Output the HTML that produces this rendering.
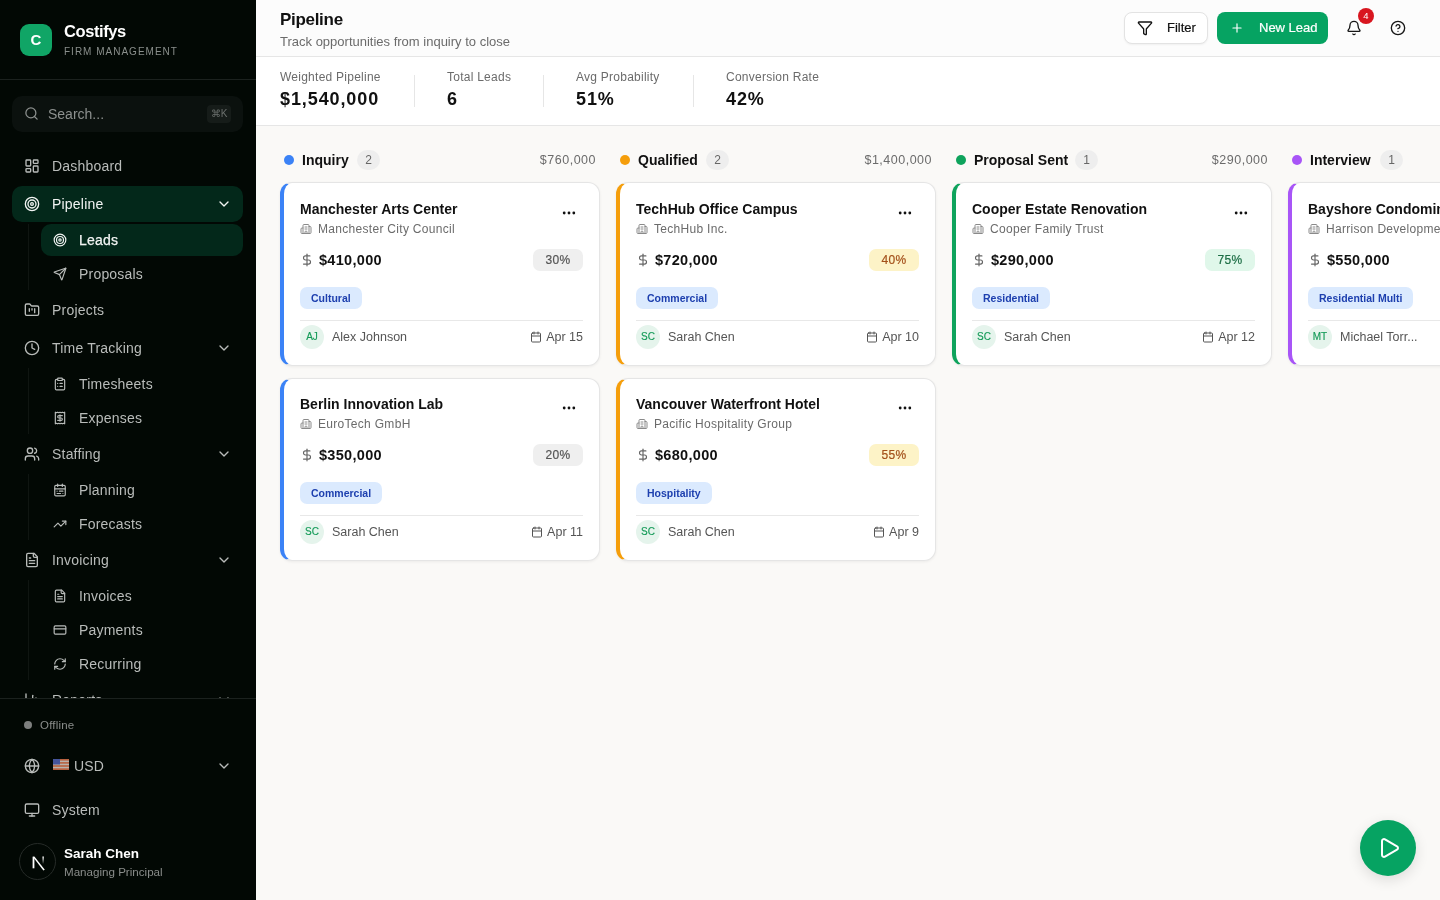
<!DOCTYPE html>
<html><head><meta charset="utf-8">
<style>
*{box-sizing:border-box;margin:0;padding:0}
html,body{width:1440px;height:900px;overflow:hidden;font-family:"Liberation Sans",sans-serif;background:#faf9f7}
.abs{position:absolute}
svg{display:block}
.sb{will-change:transform;position:absolute;left:0;top:0;width:256px;height:900px;background:#020804;color:#b9bcba;overflow:hidden}
.logo{left:20px;top:24px;width:32px;height:32px;border-radius:9px;background:#10a566;color:#fff;font-weight:bold;font-size:15px;text-align:center;line-height:32px}
.brand{left:64px;top:22px;color:#fff;font-weight:bold;font-size:16.5px;line-height:18px;letter-spacing:-0.4px}
.brand2{left:64px;top:46px;color:#8a8f8c;font-size:10px;letter-spacing:1.0px;line-height:11px}
.hr{left:0;width:256px;height:1px;background:#1b211e}
.search{left:12px;top:96px;width:231px;height:36px;border-radius:10px;background:#0b110e}
.stx{left:36px;top:0;line-height:36px;font-size:14px;color:#8d918f}
.kbd{left:195px;top:9px;width:24px;height:18px;border-radius:4px;background:#161c19;color:#6b706d;font-size:10px;line-height:18px;text-align:center}
.navwrap{left:0;top:0;width:256px;height:698px;overflow:hidden}
.nav{left:12px;width:231px;height:36px;border-radius:10px;font-size:14px;color:#b9bcba}
.nav .ic{position:absolute;left:12px;top:10px;width:16px;height:16px}
.nav .tx{position:absolute;left:40px;top:0;line-height:36px;white-space:nowrap;letter-spacing:0.2px}
.nav .chev{position:absolute;left:204px;top:10px;width:16px;height:16px}
.sub{left:41px;width:202px;height:32px;border-radius:10px;font-size:14px;color:#b9bcba}
.sub .ic{position:absolute;left:12px;top:9px;width:14px;height:14px}
.sub .tx{position:absolute;left:38px;top:0;line-height:32px;letter-spacing:0.2px}
.act{background:#03281a;color:#f2f4f3}
.sub.act .tx{-webkit-text-stroke:0.25px #f2f4f3}
.vl{left:28px;width:1px;background:#0f1511}
.offl{left:40px;top:718px;font-size:11.5px;letter-spacing:0.2px;line-height:14px;color:#8a8d8b}
.avatar{left:19px;top:843px;width:37px;height:37px;border-radius:50%;background:#020804;border:1px solid #262b28}
.uname{left:64px;top:846px;color:#fff;font-size:13.5px;font-weight:bold;line-height:16px}
.urole{left:64px;top:865px;color:#8a8d8b;font-size:11.6px;line-height:14px}
.main{will-change:transform;position:absolute;left:256px;top:0;width:1184px;height:900px;background:#faf9f7;overflow:hidden}
.hdr{left:0;top:0;width:1184px;height:57px;background:#fcfcfc;border-bottom:1px solid #e6e6e6}
.htitle{left:24px;top:9px;font-size:17px;font-weight:bold;color:#111;line-height:22px;letter-spacing:-0.3px}
.hsub{left:24px;top:34px;font-size:13px;color:#6b6b6b;line-height:15px}
.btnf{left:868px;top:12px;width:84px;height:32px;border:1px solid #e3e3e3;border-radius:8px;background:#fff;font-size:13px;color:#111;box-shadow:0 1px 2px rgba(0,0,0,.05)}
.btnn{left:961px;top:12px;width:111px;height:32px;border-radius:8px;background:#06a362;color:#fff;font-size:13px}
.badge{left:1102px;top:8px;width:16px;height:16px;border-radius:50%;background:#d8161f;color:#fff;font-size:9.5px;font-weight:normal;line-height:16px;text-align:center;border:0}
.stats{left:0;top:57px;width:1184px;height:69px;background:#fff;border-bottom:1px solid #e6e6e6}
.slab{top:13px;font-size:12px;color:#6b6b6b;line-height:14px;letter-spacing:0.25px}
.sval{top:31px;font-size:18px;font-weight:bold;color:#111;line-height:22px;letter-spacing:0.9px}
.sdiv{top:18px;width:1px;height:32px;background:#e6e6e6}
.boardwrap{left:0;top:126px;width:1184px;height:774px}
.colh{top:24px;width:320px;height:20px}
.dot{left:4px;top:5px;width:10px;height:10px;border-radius:50%}
.cname{left:22px;top:0;line-height:20px;font-size:14px;font-weight:bold;color:#111}
.cnt{top:0;height:20px;min-width:23px;border-radius:10px;background:#eeeeee;color:#666;font-size:12px;line-height:20px;text-align:center}
.camt{right:4px;top:0;line-height:20px;font-size:12.5px;color:#6b6b6b;letter-spacing:0.5px}
.card{width:320px;height:184px;background:#fff;border:1px solid #e5e5e5;border-left:4px solid;border-radius:12px;box-shadow:0 1px 3px rgba(0,0,0,.06)}
.ctitle{left:16px;top:17px;font-size:14px;font-weight:bold;color:#111;line-height:18px;white-space:nowrap}
.more{left:278px;top:28px;width:14px;height:4px}
.more i{float:left;width:3px;height:3px;border-radius:50%;background:#111;margin-right:2px}
.cli{left:16px;top:38px;font-size:12px;color:#6b6b6b;line-height:16px;white-space:nowrap;letter-spacing:0.3px}
.cli svg{position:absolute;left:0;top:2px;color:#8a8a8a}
.cli span{position:absolute;left:18px;top:0}
.val{left:16px;top:67px;font-size:14.5px;letter-spacing:0.3px;font-weight:bold;color:#111;line-height:20px;white-space:nowrap}
.val svg{position:absolute;left:0;top:3px;color:#666}
.val span{position:absolute;left:19px;top:0}
.pct{right:16px;top:66px;width:50px;height:22px;border-radius:7px;font-size:12px;line-height:22px;text-align:center;letter-spacing:0.4px;-webkit-text-stroke:0.2px currentColor}
.pct.gray{background:#efefef;color:#555}
.pct.yellow{background:#fdf3c7;color:#a3501a}
.pct.green{background:#e0f7ea;color:#1d6e45}
.tag{left:16px;top:104px;height:22px;padding:0 11px;border-radius:7px;background:#dbeafe;color:#1e40af;font-size:10.5px;font-weight:bold;line-height:22px;white-space:nowrap}
.cdiv{left:16px;top:137px;width:283px;height:1px;background:#e8e8e8}
.av{left:16px;top:142px;width:24px;height:24px;border-radius:50%;background:#e5f4ec;color:#139a57;font-size:10px;-webkit-text-stroke:0.15px #139a57;line-height:24px;text-align:center}
.pname{left:48px;top:146px;font-size:12.5px;color:#555;line-height:16px;white-space:nowrap}
.cdate{right:16px;top:146px;font-size:12.5px;color:#555;line-height:16px;white-space:nowrap;padding-left:16px}
.cdate svg{position:absolute;left:0;top:2px}
.fab{left:1104px;top:820px;width:56px;height:56px;border-radius:50%;background:#06a362;box-shadow:0 4px 14px rgba(0,0,0,.12)}
.fab svg{position:absolute;left:17px;top:16px}
.card.r2{height:183px}
.card.r2>.abs{margin-top:-1px}

</style></head><body>
<div class="sb">
  <div class="abs logo">C</div>
  <div class="abs brand">Costifys</div>
  <div class="abs brand2">FIRM MANAGEMENT</div>
  <div class="abs hr" style="top:79px"></div>
  <div class="abs search"><div class="abs" style="left:12px;top:10px;color:#8d918f"><svg width="15" height="15" viewBox="0 0 24 24" fill="none" stroke="currentColor" stroke-width="2" stroke-linecap="round" stroke-linejoin="round"><circle cx="11" cy="11" r="8"/><path d="m21 21-4.3-4.3"/></svg></div><div class="abs stx">Search...</div><div class="abs kbd">&#8984;K</div></div>
  <div class="abs navwrap"><div class="abs nav" style="top:148px"><div class="ic"><svg width="16" height="16" viewBox="0 0 24 24" fill="none" stroke="currentColor" stroke-width="2" stroke-linecap="round" stroke-linejoin="round"><rect width="7" height="9" x="3" y="3" rx="1"/><rect width="7" height="5" x="14" y="3" rx="1"/><rect width="7" height="9" x="14" y="12" rx="1"/><rect width="7" height="5" x="3" y="16" rx="1"/></svg></div><div class="tx">Dashboard</div></div><div class="abs nav act" style="top:186px"><div class="ic"><svg width="16" height="16" viewBox="0 0 24 24" fill="none" stroke="currentColor" stroke-width="2" stroke-linecap="round" stroke-linejoin="round"><circle cx="12" cy="12" r="10"/><circle cx="12" cy="12" r="6"/><circle cx="12" cy="12" r="2"/></svg></div><div class="tx">Pipeline</div><div class="chev"><svg width="16" height="16" viewBox="0 0 24 24" fill="none" stroke="currentColor" stroke-width="2" stroke-linecap="round" stroke-linejoin="round"><path d="m6 9 6 6 6-6"/></svg></div></div><div class="abs sub act" style="top:224px"><div class="ic"><svg width="14" height="14" viewBox="0 0 24 24" fill="none" stroke="currentColor" stroke-width="2" stroke-linecap="round" stroke-linejoin="round"><circle cx="12" cy="12" r="10"/><circle cx="12" cy="12" r="6"/><circle cx="12" cy="12" r="2"/></svg></div><div class="tx">Leads</div></div><div class="abs sub" style="top:258px"><div class="ic"><svg width="14" height="14" viewBox="0 0 24 24" fill="none" stroke="currentColor" stroke-width="2" stroke-linecap="round" stroke-linejoin="round"><path d="M14.536 21.686a.5.5 0 0 0 .937-.024l6.5-19a.496.496 0 0 0-.635-.635l-19 6.5a.5.5 0 0 0-.024.937l7.93 3.18a2 2 0 0 1 1.112 1.11z"/><path d="m21.854 2.147-10.94 10.939"/></svg></div><div class="tx">Proposals</div></div><div class="abs nav" style="top:292px"><div class="ic"><svg width="16" height="16" viewBox="0 0 24 24" fill="none" stroke="currentColor" stroke-width="2" stroke-linecap="round" stroke-linejoin="round"><path d="M4 20h16a2 2 0 0 0 2-2V8a2 2 0 0 0-2-2h-7.930a2 2 0 0 1-1.660-.9l-.820-1.200A2 2 0 0 0 7.930 3H4a2 2 0 0 0-2 2v13c0 1.100.9 2 2 2Z"/><path d="M8 10v4"/><path d="M12 10v2"/><path d="M16 10v6"/></svg></div><div class="tx">Projects</div></div><div class="abs nav" style="top:330px"><div class="ic"><svg width="16" height="16" viewBox="0 0 24 24" fill="none" stroke="currentColor" stroke-width="2" stroke-linecap="round" stroke-linejoin="round"><circle cx="12" cy="12" r="10"/><polyline points="12 6 12 12 16 14"/></svg></div><div class="tx">Time Tracking</div><div class="chev"><svg width="16" height="16" viewBox="0 0 24 24" fill="none" stroke="currentColor" stroke-width="2" stroke-linecap="round" stroke-linejoin="round"><path d="m6 9 6 6 6-6"/></svg></div></div><div class="abs sub" style="top:368px"><div class="ic"><svg width="14" height="14" viewBox="0 0 24 24" fill="none" stroke="currentColor" stroke-width="2" stroke-linecap="round" stroke-linejoin="round"><rect width="8" height="4" x="8" y="2" rx="1" ry="1"/><path d="M16 4h2a2 2 0 0 1 2 2v14a2 2 0 0 1-2 2H6a2 2 0 0 1-2-2V6a2 2 0 0 1 2-2h2"/><path d="M12 11h4"/><path d="M12 16h4"/><path d="M8 11h.01"/><path d="M8 16h.01"/></svg></div><div class="tx">Timesheets</div></div><div class="abs sub" style="top:402px"><div class="ic"><svg width="14" height="14" viewBox="0 0 24 24" fill="none" stroke="currentColor" stroke-width="2" stroke-linecap="round" stroke-linejoin="round"><path d="M4 2v20l2-1 2 1 2-1 2 1 2-1 2 1 2-1 2 1V2l-2 1-2-1-2 1-2-1-2 1-2-1-2 1Z"/><path d="M16 8h-6a2 2 0 1 0 0 4h4a2 2 0 1 1 0 4H8"/><path d="M12 17.5v-11"/></svg></div><div class="tx">Expenses</div></div><div class="abs nav" style="top:436px"><div class="ic"><svg width="16" height="16" viewBox="0 0 24 24" fill="none" stroke="currentColor" stroke-width="2" stroke-linecap="round" stroke-linejoin="round"><path d="M16 21v-2a4 4 0 0 0-4-4H6a4 4 0 0 0-4 4v2"/><circle cx="9" cy="7" r="4"/><path d="M22 21v-2a4 4 0 0 0-3-3.870"/><path d="M16 3.130a4 4 0 0 1 0 7.750"/></svg></div><div class="tx">Staffing</div><div class="chev"><svg width="16" height="16" viewBox="0 0 24 24" fill="none" stroke="currentColor" stroke-width="2" stroke-linecap="round" stroke-linejoin="round"><path d="m6 9 6 6 6-6"/></svg></div></div><div class="abs sub" style="top:474px"><div class="ic"><svg width="14" height="14" viewBox="0 0 24 24" fill="none" stroke="currentColor" stroke-width="2" stroke-linecap="round" stroke-linejoin="round"><rect width="18" height="18" x="3" y="4" rx="2"/><path d="M16 2v4"/><path d="M3 10h18"/><path d="M8 2v4"/><path d="M17 14h-6"/><path d="M13 18H7"/><path d="M7 14h.01"/><path d="M17 18h.01"/></svg></div><div class="tx">Planning</div></div><div class="abs sub" style="top:508px"><div class="ic"><svg width="14" height="14" viewBox="0 0 24 24" fill="none" stroke="currentColor" stroke-width="2" stroke-linecap="round" stroke-linejoin="round"><polyline points="22 7 13.5 15.5 8.5 10.5 2 17"/><polyline points="16 7 22 7 22 13"/></svg></div><div class="tx">Forecasts</div></div><div class="abs nav" style="top:542px"><div class="ic"><svg width="16" height="16" viewBox="0 0 24 24" fill="none" stroke="currentColor" stroke-width="2" stroke-linecap="round" stroke-linejoin="round"><path d="M15 2H6a2 2 0 0 0-2 2v16a2 2 0 0 0 2 2h12a2 2 0 0 0 2-2V7Z"/><path d="M14 2v4a2 2 0 0 0 2 2h4"/><path d="M10 9H8"/><path d="M16 13H8"/><path d="M16 17H8"/></svg></div><div class="tx">Invoicing</div><div class="chev"><svg width="16" height="16" viewBox="0 0 24 24" fill="none" stroke="currentColor" stroke-width="2" stroke-linecap="round" stroke-linejoin="round"><path d="m6 9 6 6 6-6"/></svg></div></div><div class="abs sub" style="top:580px"><div class="ic"><svg width="14" height="14" viewBox="0 0 24 24" fill="none" stroke="currentColor" stroke-width="2" stroke-linecap="round" stroke-linejoin="round"><path d="M15 2H6a2 2 0 0 0-2 2v16a2 2 0 0 0 2 2h12a2 2 0 0 0 2-2V7Z"/><path d="M14 2v4a2 2 0 0 0 2 2h4"/><path d="M10 9H8"/><path d="M16 13H8"/><path d="M16 17H8"/></svg></div><div class="tx">Invoices</div></div><div class="abs sub" style="top:614px"><div class="ic"><svg width="14" height="14" viewBox="0 0 24 24" fill="none" stroke="currentColor" stroke-width="2" stroke-linecap="round" stroke-linejoin="round"><rect width="20" height="14" x="2" y="5" rx="2"/><line x1="2" x2="22" y1="10" y2="10"/></svg></div><div class="tx">Payments</div></div><div class="abs sub" style="top:648px"><div class="ic"><svg width="14" height="14" viewBox="0 0 24 24" fill="none" stroke="currentColor" stroke-width="2" stroke-linecap="round" stroke-linejoin="round"><path d="M3 12a9 9 0 0 1 9-9 9.750 9.750 0 0 1 6.740 2.740L21 8"/><path d="M21 3v5h-5"/><path d="M21 12a9 9 0 0 1-9 9 9.750 9.750 0 0 1-6.740-2.740L3 16"/><path d="M8 16H3v5"/></svg></div><div class="tx">Recurring</div></div><div class="abs nav" style="top:682px"><div class="ic"><svg width="16" height="16" viewBox="0 0 24 24" fill="none" stroke="currentColor" stroke-width="2" stroke-linecap="round" stroke-linejoin="round"><path d="M3 3v16a2 2 0 0 0 2 2h16"/><path d="M18 17V9"/><path d="M13 17V5"/><path d="M8 17v-3"/></svg></div><div class="tx">Reports</div><div class="chev"><svg width="16" height="16" viewBox="0 0 24 24" fill="none" stroke="currentColor" stroke-width="2" stroke-linecap="round" stroke-linejoin="round"><path d="m6 9 6 6 6-6"/></svg></div></div><div class="abs vl" style="top:224px;height:66px"></div><div class="abs vl" style="top:368px;height:66px"></div><div class="abs vl" style="top:474px;height:66px"></div><div class="abs vl" style="top:580px;height:100px"></div></div>
  <div class="abs hr" style="top:698px"></div>
  <div class="abs" style="left:24px;top:721px;width:8px;height:8px;border-radius:50%;background:#7d7f7e"></div>
  <div class="abs offl">Offline</div>
  <div class="abs nav" style="top:748px"><div class="ic"><svg width="16" height="16" viewBox="0 0 24 24" fill="none" stroke="currentColor" stroke-width="2" stroke-linecap="round" stroke-linejoin="round"><circle cx="12" cy="12" r="10"/><path d="M12 2a14.500 14.500 0 0 0 0 20 14.500 14.500 0 0 0 0-20"/><path d="M2 12h20"/></svg></div><svg class="abs" style="left:41px;top:11px" width="16" height="11" viewBox="0 0 16 11"><rect width="16" height="11" fill="#b9b2ab"/><rect y="0" width="16" height="1.6" fill="#b8613f"/><rect y="3.1" width="16" height="1.6" fill="#b8613f"/><rect y="6.2" width="16" height="1.6" fill="#b8613f"/><rect y="9.3" width="16" height="1.7" fill="#b8613f"/><rect width="7" height="5.5" fill="#45549a"/></svg><div class="tx" style="left:62px">USD</div><div class="chev"><svg width="16" height="16" viewBox="0 0 24 24" fill="none" stroke="currentColor" stroke-width="2" stroke-linecap="round" stroke-linejoin="round"><path d="m6 9 6 6 6-6"/></svg></div></div>
  <div class="abs nav" style="top:792px"><div class="ic"><svg width="16" height="16" viewBox="0 0 24 24" fill="none" stroke="currentColor" stroke-width="2" stroke-linecap="round" stroke-linejoin="round"><rect width="20" height="14" x="2" y="3" rx="2"/><line x1="8" x2="16" y1="21" y2="21"/><line x1="12" x2="12" y1="17" y2="21"/></svg></div><div class="tx">System</div></div>
  <div class="abs avatar"><svg width="37" height="37" viewBox="0 0 37 37" style="position:absolute;left:-0.4px;top:-0.3px"><defs><linearGradient id="ng" x1="0" y1="0" x2="0" y2="1"><stop offset="0" stop-color="#fff"/><stop offset="1" stop-color="#fff" stop-opacity="0"/></linearGradient></defs><rect x="12.6" y="12.7" width="1.8" height="11.6" fill="#fff"/><path d="M12.8 12.7 L14.6 12.7 L24.8 25.7 L23.4 26.5 Z" fill="#fff"/><rect x="22.4" y="12.5" width="1.5" height="7.5" fill="url(#ng)"/></svg></div>
  <div class="abs uname">Sarah Chen</div>
  <div class="abs urole">Managing Principal</div>
</div>
<div class="main"><div class="abs hdr">
  <div class="abs htitle">Pipeline</div>
  <div class="abs hsub">Track opportunities from inquiry to close</div>
  <div class="abs btnf"><svg width="16" height="16" viewBox="0 0 24 24" fill="none" stroke="currentColor" stroke-width="2" stroke-linecap="round" stroke-linejoin="round" class="abs" style="left:12px;top:7px"><path d="M10 20a1 1 0 0 0 .553.895l2 1A1 1 0 0 0 14 21v-7a2 2 0 0 1 .517-1.341L21.740 4.670A1 1 0 0 0 21 3H3a1 1 0 0 0-.742 1.670l7.225 7.989A2 2 0 0 1 10 14z"/></svg><span class="abs" style="left:42px;top:0;line-height:30px;-webkit-text-stroke:0.2px #111">Filter</span></div>
  <div class="abs btnn"><svg width="14" height="14" viewBox="0 0 24 24" fill="none" stroke="currentColor" stroke-width="2" stroke-linecap="round" stroke-linejoin="round" class="abs" style="left:13px;top:9px"><path d="M5 12h14"/><path d="M12 5v14"/></svg><span class="abs" style="left:42px;top:0;line-height:32px;-webkit-text-stroke:0.2px #fff">New Lead</span></div>
  <div class="abs" style="left:1090px;top:20px;color:#161616"><svg width="16" height="16" viewBox="0 0 24 24" fill="none" stroke="currentColor" stroke-width="2" stroke-linecap="round" stroke-linejoin="round"><path d="M10.268 21a2 2 0 0 0 3.464 0"/><path d="M3.262 15.326A1 1 0 0 0 4 17h16a1 1 0 0 0 .740-1.673C19.410 13.956 18 12.499 18 8A6 6 0 0 0 6 8c0 4.499-1.411 5.956-2.738 7.326"/></svg></div>
  <div class="abs badge">4</div>
  <div class="abs" style="left:1134px;top:20px;color:#161616"><svg width="16" height="16" viewBox="0 0 24 24" fill="none" stroke="currentColor" stroke-width="2" stroke-linecap="round" stroke-linejoin="round"><circle cx="12" cy="12" r="10"/><path d="M9.090 9a3 3 0 0 1 5.830 1c0 2-3 3-3 3"/><path d="M12 17h.01"/></svg></div>
</div><div class="abs stats"><div class="abs slab" style="left:24px">Weighted Pipeline</div><div class="abs sval" style="left:24px">$1,540,000</div><div class="abs slab" style="left:191px">Total Leads</div><div class="abs sval" style="left:191px">6</div><div class="abs slab" style="left:320px">Avg Probability</div><div class="abs sval" style="left:320px">51%</div><div class="abs slab" style="left:470px">Conversion Rate</div><div class="abs sval" style="left:470px">42%</div><div class="abs sdiv" style="left:158px"></div><div class="abs sdiv" style="left:287px"></div><div class="abs sdiv" style="left:437px"></div></div><div class="abs boardwrap"><div class="abs colh" style="left:24px"><div class="abs dot" style="background:#3b82f6"></div><div class="abs cname">Inquiry</div><div class="abs cnt" style="left:77px">2</div><div class="abs camt">$760,000</div></div><div class="abs card" style="left:24px;top:56px;border-left-color:#3b82f6"><div class="abs ctitle">Manchester Arts Center</div><svg class="abs more" width="16" height="4" viewBox="0 0 16 4"><circle cx="2.5" cy="2" r="1.6" fill="#111"/><circle cx="8" cy="2" r="1.6" fill="#111"/><circle cx="13.5" cy="2" r="1.6" fill="#111"/></svg><div class="abs cli"><svg width="12" height="12" viewBox="0 0 24 24" fill="none" stroke="currentColor" stroke-width="2" stroke-linecap="round" stroke-linejoin="round"><path d="M10 12h4"/><path d="M10 8h4"/><path d="M14 21v-3a2 2 0 0 0-4 0v3"/><path d="M6 10H4a2 2 0 0 0-2 2v7a2 2 0 0 0 2 2h16a2 2 0 0 0 2-2V9a2 2 0 0 0-2-2h-2"/><path d="M6 21V5a2 2 0 0 1 2-2h8a2 2 0 0 1 2 2v16"/></svg><span>Manchester City Council</span></div><div class="abs val"><svg width="14" height="14" viewBox="0 0 24 24" fill="none" stroke="currentColor" stroke-width="2" stroke-linecap="round" stroke-linejoin="round"><line x1="12" x2="12" y1="2" y2="22"/><path d="M17 5H9.500a3.500 3.500 0 0 0 0 7h5a3.500 3.500 0 0 1 0 7H6"/></svg><span>$410,000</span></div><div class="abs pct gray">30%</div><div class="abs tag">Cultural</div><div class="abs cdiv"></div><div class="abs av">AJ</div><div class="abs pname">Alex Johnson</div><div class="abs cdate"><svg width="12" height="12" viewBox="0 0 24 24" fill="none" stroke="currentColor" stroke-width="2" stroke-linecap="round" stroke-linejoin="round"><rect width="18" height="18" x="3" y="4" rx="2"/><path d="M16 2v4"/><path d="M8 2v4"/><path d="M3 10h18"/></svg><span>Apr 15</span></div></div><div class="abs card r2" style="left:24px;top:252px;border-left-color:#3b82f6"><div class="abs ctitle">Berlin Innovation Lab</div><svg class="abs more" width="16" height="4" viewBox="0 0 16 4"><circle cx="2.5" cy="2" r="1.6" fill="#111"/><circle cx="8" cy="2" r="1.6" fill="#111"/><circle cx="13.5" cy="2" r="1.6" fill="#111"/></svg><div class="abs cli"><svg width="12" height="12" viewBox="0 0 24 24" fill="none" stroke="currentColor" stroke-width="2" stroke-linecap="round" stroke-linejoin="round"><path d="M10 12h4"/><path d="M10 8h4"/><path d="M14 21v-3a2 2 0 0 0-4 0v3"/><path d="M6 10H4a2 2 0 0 0-2 2v7a2 2 0 0 0 2 2h16a2 2 0 0 0 2-2V9a2 2 0 0 0-2-2h-2"/><path d="M6 21V5a2 2 0 0 1 2-2h8a2 2 0 0 1 2 2v16"/></svg><span>EuroTech GmbH</span></div><div class="abs val"><svg width="14" height="14" viewBox="0 0 24 24" fill="none" stroke="currentColor" stroke-width="2" stroke-linecap="round" stroke-linejoin="round"><line x1="12" x2="12" y1="2" y2="22"/><path d="M17 5H9.500a3.500 3.500 0 0 0 0 7h5a3.500 3.500 0 0 1 0 7H6"/></svg><span>$350,000</span></div><div class="abs pct gray">20%</div><div class="abs tag">Commercial</div><div class="abs cdiv"></div><div class="abs av">SC</div><div class="abs pname">Sarah Chen</div><div class="abs cdate"><svg width="12" height="12" viewBox="0 0 24 24" fill="none" stroke="currentColor" stroke-width="2" stroke-linecap="round" stroke-linejoin="round"><rect width="18" height="18" x="3" y="4" rx="2"/><path d="M16 2v4"/><path d="M8 2v4"/><path d="M3 10h18"/></svg><span>Apr 11</span></div></div><div class="abs colh" style="left:360px"><div class="abs dot" style="background:#f59e0b"></div><div class="abs cname">Qualified</div><div class="abs cnt" style="left:90px">2</div><div class="abs camt">$1,400,000</div></div><div class="abs card" style="left:360px;top:56px;border-left-color:#f59e0b"><div class="abs ctitle">TechHub Office Campus</div><svg class="abs more" width="16" height="4" viewBox="0 0 16 4"><circle cx="2.5" cy="2" r="1.6" fill="#111"/><circle cx="8" cy="2" r="1.6" fill="#111"/><circle cx="13.5" cy="2" r="1.6" fill="#111"/></svg><div class="abs cli"><svg width="12" height="12" viewBox="0 0 24 24" fill="none" stroke="currentColor" stroke-width="2" stroke-linecap="round" stroke-linejoin="round"><path d="M10 12h4"/><path d="M10 8h4"/><path d="M14 21v-3a2 2 0 0 0-4 0v3"/><path d="M6 10H4a2 2 0 0 0-2 2v7a2 2 0 0 0 2 2h16a2 2 0 0 0 2-2V9a2 2 0 0 0-2-2h-2"/><path d="M6 21V5a2 2 0 0 1 2-2h8a2 2 0 0 1 2 2v16"/></svg><span>TechHub Inc.</span></div><div class="abs val"><svg width="14" height="14" viewBox="0 0 24 24" fill="none" stroke="currentColor" stroke-width="2" stroke-linecap="round" stroke-linejoin="round"><line x1="12" x2="12" y1="2" y2="22"/><path d="M17 5H9.500a3.500 3.500 0 0 0 0 7h5a3.500 3.500 0 0 1 0 7H6"/></svg><span>$720,000</span></div><div class="abs pct yellow">40%</div><div class="abs tag">Commercial</div><div class="abs cdiv"></div><div class="abs av">SC</div><div class="abs pname">Sarah Chen</div><div class="abs cdate"><svg width="12" height="12" viewBox="0 0 24 24" fill="none" stroke="currentColor" stroke-width="2" stroke-linecap="round" stroke-linejoin="round"><rect width="18" height="18" x="3" y="4" rx="2"/><path d="M16 2v4"/><path d="M8 2v4"/><path d="M3 10h18"/></svg><span>Apr 10</span></div></div><div class="abs card r2" style="left:360px;top:252px;border-left-color:#f59e0b"><div class="abs ctitle">Vancouver Waterfront Hotel</div><svg class="abs more" width="16" height="4" viewBox="0 0 16 4"><circle cx="2.5" cy="2" r="1.6" fill="#111"/><circle cx="8" cy="2" r="1.6" fill="#111"/><circle cx="13.5" cy="2" r="1.6" fill="#111"/></svg><div class="abs cli"><svg width="12" height="12" viewBox="0 0 24 24" fill="none" stroke="currentColor" stroke-width="2" stroke-linecap="round" stroke-linejoin="round"><path d="M10 12h4"/><path d="M10 8h4"/><path d="M14 21v-3a2 2 0 0 0-4 0v3"/><path d="M6 10H4a2 2 0 0 0-2 2v7a2 2 0 0 0 2 2h16a2 2 0 0 0 2-2V9a2 2 0 0 0-2-2h-2"/><path d="M6 21V5a2 2 0 0 1 2-2h8a2 2 0 0 1 2 2v16"/></svg><span>Pacific Hospitality Group</span></div><div class="abs val"><svg width="14" height="14" viewBox="0 0 24 24" fill="none" stroke="currentColor" stroke-width="2" stroke-linecap="round" stroke-linejoin="round"><line x1="12" x2="12" y1="2" y2="22"/><path d="M17 5H9.500a3.500 3.500 0 0 0 0 7h5a3.500 3.500 0 0 1 0 7H6"/></svg><span>$680,000</span></div><div class="abs pct yellow">55%</div><div class="abs tag">Hospitality</div><div class="abs cdiv"></div><div class="abs av">SC</div><div class="abs pname">Sarah Chen</div><div class="abs cdate"><svg width="12" height="12" viewBox="0 0 24 24" fill="none" stroke="currentColor" stroke-width="2" stroke-linecap="round" stroke-linejoin="round"><rect width="18" height="18" x="3" y="4" rx="2"/><path d="M16 2v4"/><path d="M8 2v4"/><path d="M3 10h18"/></svg><span>Apr 9</span></div></div><div class="abs colh" style="left:696px"><div class="abs dot" style="background:#0ea35c"></div><div class="abs cname">Proposal Sent</div><div class="abs cnt" style="left:123px">1</div><div class="abs camt">$290,000</div></div><div class="abs card" style="left:696px;top:56px;border-left-color:#0ea35c"><div class="abs ctitle">Cooper Estate Renovation</div><svg class="abs more" width="16" height="4" viewBox="0 0 16 4"><circle cx="2.5" cy="2" r="1.6" fill="#111"/><circle cx="8" cy="2" r="1.6" fill="#111"/><circle cx="13.5" cy="2" r="1.6" fill="#111"/></svg><div class="abs cli"><svg width="12" height="12" viewBox="0 0 24 24" fill="none" stroke="currentColor" stroke-width="2" stroke-linecap="round" stroke-linejoin="round"><path d="M10 12h4"/><path d="M10 8h4"/><path d="M14 21v-3a2 2 0 0 0-4 0v3"/><path d="M6 10H4a2 2 0 0 0-2 2v7a2 2 0 0 0 2 2h16a2 2 0 0 0 2-2V9a2 2 0 0 0-2-2h-2"/><path d="M6 21V5a2 2 0 0 1 2-2h8a2 2 0 0 1 2 2v16"/></svg><span>Cooper Family Trust</span></div><div class="abs val"><svg width="14" height="14" viewBox="0 0 24 24" fill="none" stroke="currentColor" stroke-width="2" stroke-linecap="round" stroke-linejoin="round"><line x1="12" x2="12" y1="2" y2="22"/><path d="M17 5H9.500a3.500 3.500 0 0 0 0 7h5a3.500 3.500 0 0 1 0 7H6"/></svg><span>$290,000</span></div><div class="abs pct green">75%</div><div class="abs tag">Residential</div><div class="abs cdiv"></div><div class="abs av">SC</div><div class="abs pname">Sarah Chen</div><div class="abs cdate"><svg width="12" height="12" viewBox="0 0 24 24" fill="none" stroke="currentColor" stroke-width="2" stroke-linecap="round" stroke-linejoin="round"><rect width="18" height="18" x="3" y="4" rx="2"/><path d="M16 2v4"/><path d="M8 2v4"/><path d="M3 10h18"/></svg><span>Apr 12</span></div></div><div class="abs colh" style="left:1032px"><div class="abs dot" style="background:#a855f7"></div><div class="abs cname">Interview</div><div class="abs cnt" style="left:92px">1</div><div class="abs camt"></div></div><div class="abs card" style="left:1032px;top:56px;border-left-color:#a855f7"><div class="abs ctitle">Bayshore Condominiums</div><svg class="abs more" width="16" height="4" viewBox="0 0 16 4"><circle cx="2.5" cy="2" r="1.6" fill="#111"/><circle cx="8" cy="2" r="1.6" fill="#111"/><circle cx="13.5" cy="2" r="1.6" fill="#111"/></svg><div class="abs cli"><svg width="12" height="12" viewBox="0 0 24 24" fill="none" stroke="currentColor" stroke-width="2" stroke-linecap="round" stroke-linejoin="round"><path d="M10 12h4"/><path d="M10 8h4"/><path d="M14 21v-3a2 2 0 0 0-4 0v3"/><path d="M6 10H4a2 2 0 0 0-2 2v7a2 2 0 0 0 2 2h16a2 2 0 0 0 2-2V9a2 2 0 0 0-2-2h-2"/><path d="M6 21V5a2 2 0 0 1 2-2h8a2 2 0 0 1 2 2v16"/></svg><span>Harrison Development</span></div><div class="abs val"><svg width="14" height="14" viewBox="0 0 24 24" fill="none" stroke="currentColor" stroke-width="2" stroke-linecap="round" stroke-linejoin="round"><line x1="12" x2="12" y1="2" y2="22"/><path d="M17 5H9.500a3.500 3.500 0 0 0 0 7h5a3.500 3.500 0 0 1 0 7H6"/></svg><span>$550,000</span></div><div class="abs tag">Residential Multi</div><div class="abs cdiv"></div><div class="abs av">MT</div><div class="abs pname">Michael Torr...</div></div></div>
<div class="abs fab"><svg width="24" height="24" viewBox="0 0 24 24" fill="none" stroke="#fff" stroke-width="2" stroke-linecap="round" stroke-linejoin="round"><path d="M5 5a2 2 0 0 1 3.008-1.728l11.997 6.998a2 2 0 0 1 .003 3.458l-12 7A2 2 0 0 1 5 19z"/></svg></div></div>
</body></html>
